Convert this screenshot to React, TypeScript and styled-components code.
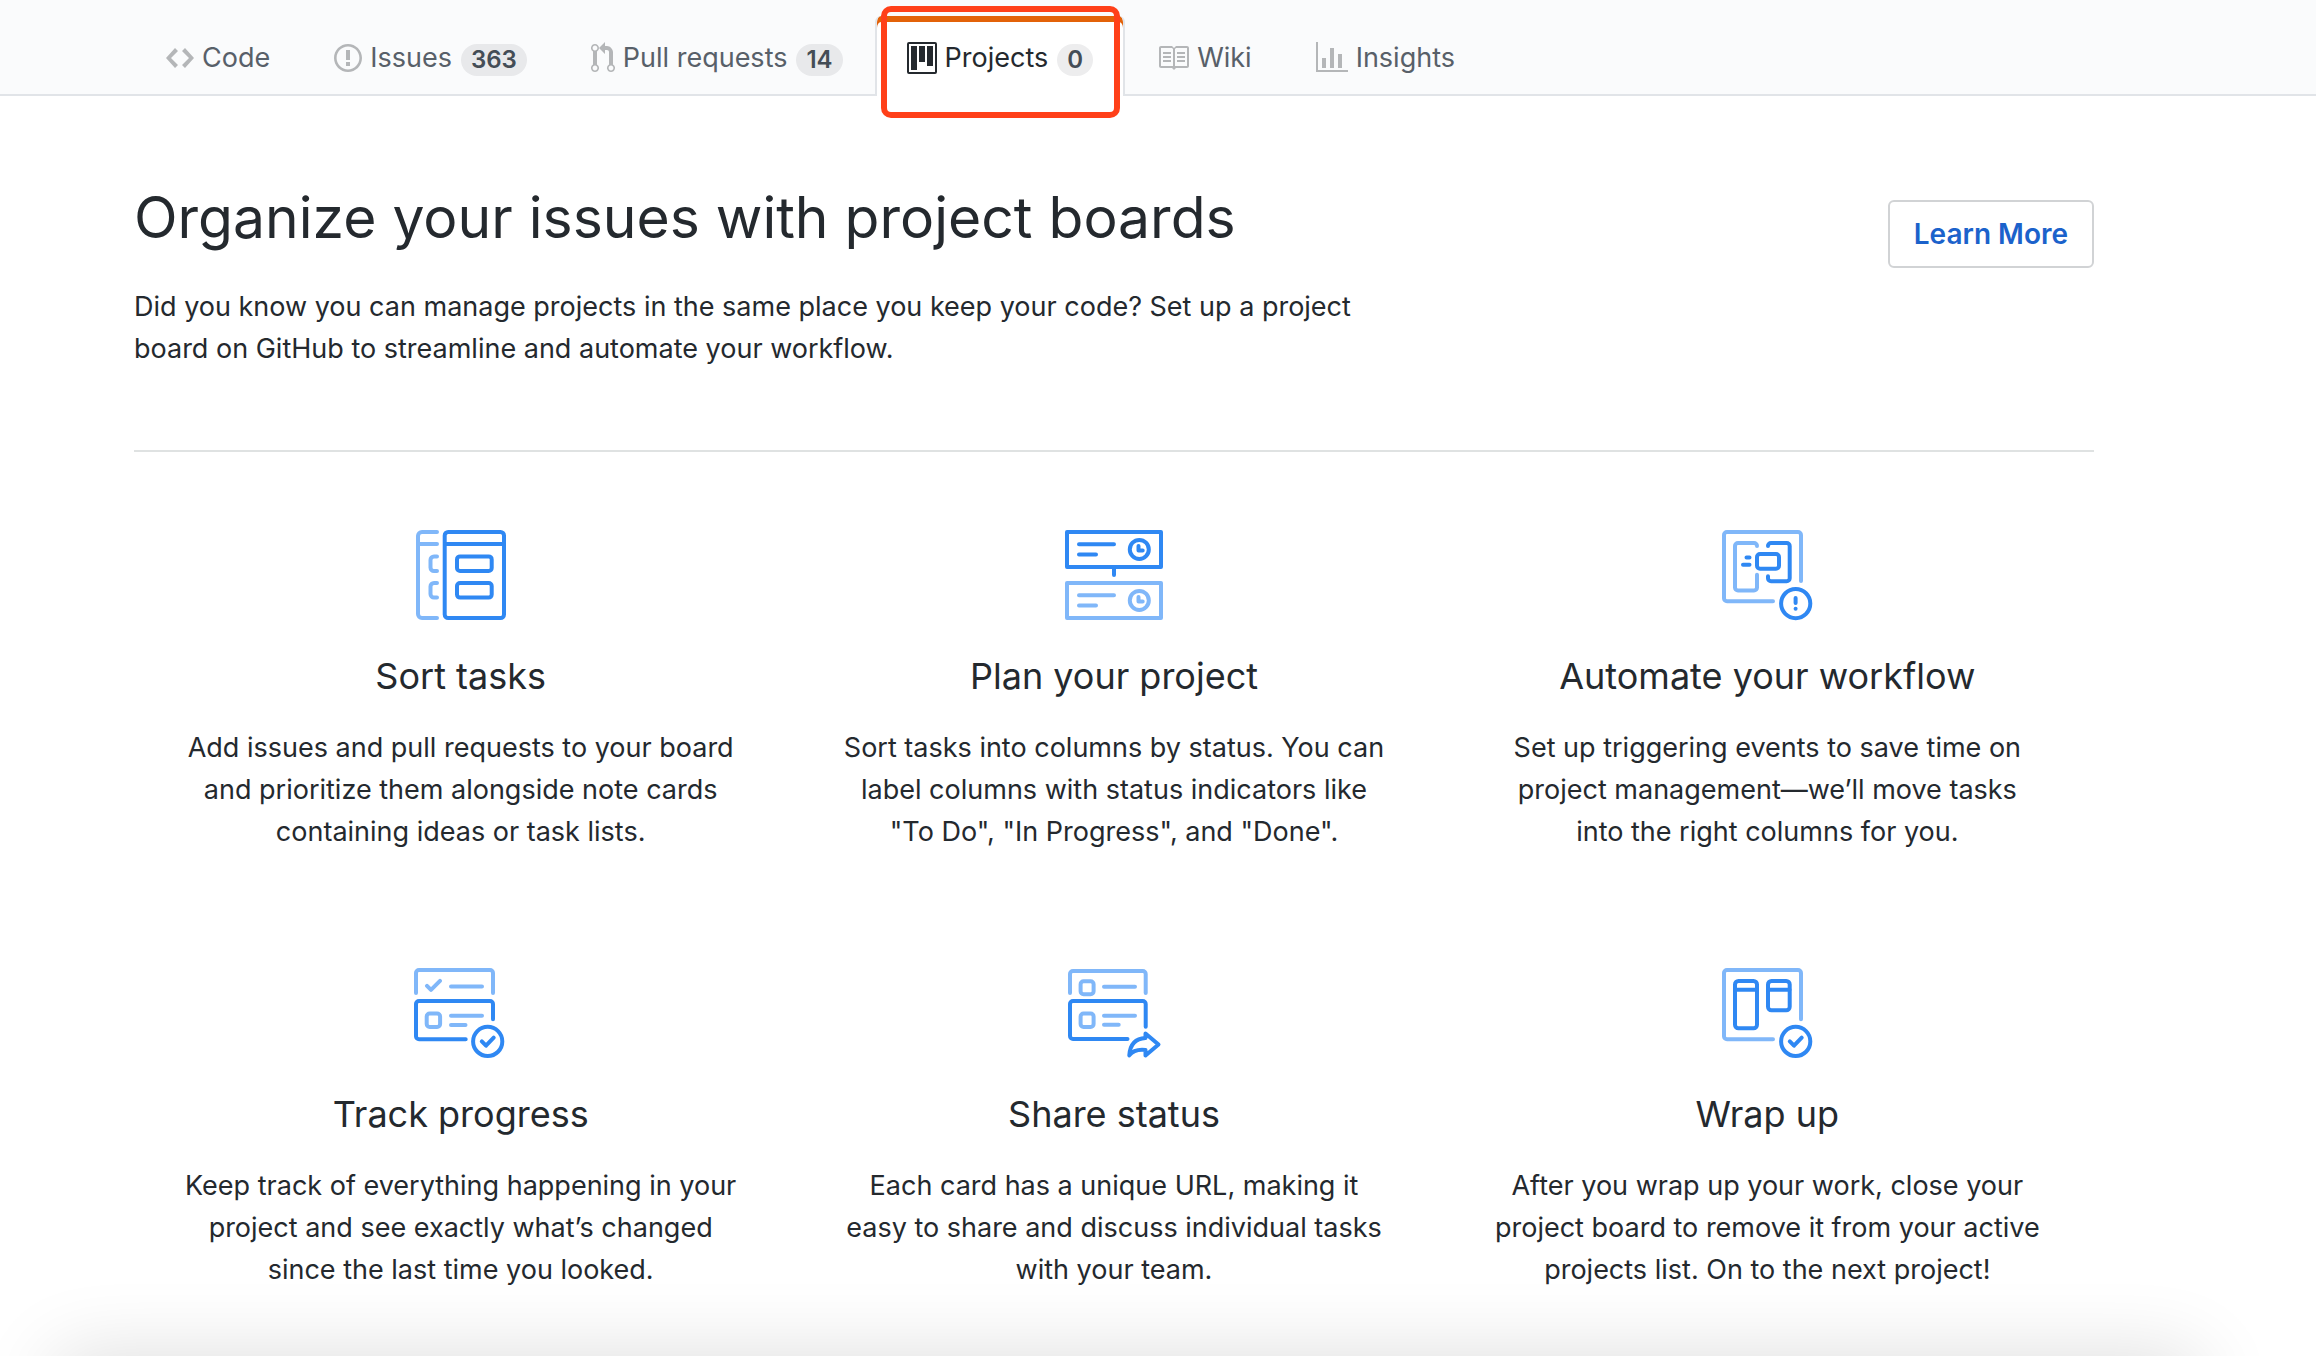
import React from 'react';
import styled, { createGlobalStyle } from 'styled-components';

const DARK = '#2f88f3';
const LIGHT = '#80b7f9';

const GlobalStyle = createGlobalStyle`
  * { box-sizing: border-box; }
  body {
    margin: 0;
    background: #ffffff;
    color: #24292e;
    font-family: Inter, Roboto, "Liberation Sans", sans-serif;
    font-size: 27px;
    line-height: 42px;
  }
  h1, h2, p { margin: 0; font-weight: 400; }
`;

const Page = styled.div`
  position: relative;
  min-height: 100vh;
  overflow: hidden;
`;

const TabBar = styled.nav`
  display: flex;
  align-items: flex-end;
  height: 96px;
  padding-left: 134px;
  background: #fafbfc;
  box-shadow: inset 0 -2px 0 #e1e4e8;
`;

const Tab = styled.a<{ $active?: boolean }>`
  position: relative;
  display: flex;
  align-items: center;
  gap: 8px;
  height: 80px;
  padding: 4px 30px 0;
  border: solid ${p => (p.$active ? '#e1e4e8' : 'transparent')};
  border-width: 0 2px;
  border-radius: 6px 6px 0 0;
  background: ${p => (p.$active ? '#ffffff' : 'transparent')};
  box-shadow: ${p => (p.$active ? 'inset 0 6px 0 #e36209' : 'none')};
  color: ${p => (p.$active ? '#24292e' : '#586069')};
  text-decoration: none;
  white-space: nowrap;

  svg {
    display: block;
    height: 32px;
    fill: ${p => (p.$active ? '#24292e' : '#b4b6b8')};
  }
`;

const Count = styled.span`
  height: 32px;
  margin: 4px 0 0 1px;
  padding: 0 10px;
  border-radius: 16px;
  background: rgba(27, 31, 35, 0.08);
  color: #444d56;
  font-size: 24px;
  font-weight: 600;
  line-height: 32px;
`;

const Highlight = styled.span`
  position: absolute;
  inset: -10px 3px -22px 4px;
  border: 6px solid #ff4019;
  border-radius: 10px;
  pointer-events: none;
`;

const Main = styled.main`
  max-width: 2094px;
  padding-left: 134px;
`;

const Intro = styled.header`
  display: flex;
  justify-content: space-between;
  align-items: flex-start;
  padding: 80px 0;
  border-bottom: 2px solid #dfe2e2;
`;

const Heading = styled.h1`
  margin-bottom: 26px;
  font-size: 57px;
  line-height: 84px;
`;

const Lead = styled.p`
  max-width: 1280px;
`;

const LearnMore = styled.button`
  height: 68px;
  margin-top: 24px;
  padding: 0 24px;
  border: 2px solid #d1d3d5;
  border-radius: 6px;
  background: #ffffff;
  color: #1b62cb;
  font: inherit;
  font-size: 28px;
  font-weight: 600;
`;

const Features = styled.div`
  display: grid;
  grid-template-columns: repeat(3, 1fr);
  row-gap: 110px;
  padding: 73px 0 64px;
`;

const Feature = styled.section`
  display: flex;
  flex-direction: column;
  align-items: center;
  padding: 0 40px;
  text-align: center;
`;

const FeatureIcon = styled.svg`
  width: 100px;
  height: 100px;
  fill: none;
  stroke-width: 4;
  stroke-linecap: round;
  stroke-linejoin: round;
`;

const FeatureTitle = styled.h2`
  margin: 21px 0;
  font-size: 36px;
  line-height: 60px;
`;

const Line = styled.span`
  display: block;
  white-space: nowrap;
`;

const BottomShade = styled.div`
  position: absolute;
  top: 100%;
  left: 56px;
  right: 118px;
  height: 80px;
  box-shadow: 0 0 80px rgba(0, 0, 0, 0.14);
  pointer-events: none;
`;

const tabs = [
  {
    label: 'Code', width: 14,
    d: 'M9.5 3L8 4.5 11.5 8 8 11.5 9.5 13 14 8 9.5 3zm-5 0L0 8l4.5 5L6 11.5 2.5 8 6 4.5 4.5 3z',
  },
  {
    label: 'Issues', width: 14, count: 363,
    d: 'M7 2.3c3.14 0 5.7 2.56 5.7 5.7s-2.56 5.7-5.7 5.7A5.71 5.71 0 0 1 1.3 8c0-3.14 2.56-5.7 5.7-5.7zM7 1C3.14 1 0 4.14 0 8s3.14 7 7 7 7-3.14 7-7-3.14-7-7-7zm1 3H6v5h2V4zm0 6H6v2h2v-2z',
  },
  {
    label: 'Pull requests', width: 12, count: 14,
    d: 'M11 11.28V5c-.03-.78-.34-1.47-.94-2.06C9.46 2.35 8.78 2.03 8 2H7V0L4 3l3 3V4h1c.27.02.48.11.69.31.21.2.3.42.31.69v6.28A1.993 1.993 0 0 0 10 15a1.993 1.993 0 0 0 1-3.72zm-1 2.92c-.66 0-1.2-.55-1.2-1.2 0-.65.55-1.2 1.2-1.2.65 0 1.2.55 1.2 1.2 0 .65-.55 1.2-1.2 1.2zM4 3c0-1.11-.89-2-2-2a1.993 1.993 0 0 0-1 3.72v6.56A1.993 1.993 0 0 0 2 15a1.993 1.993 0 0 0 1-3.72V4.72c.59-.34 1-.98 1-1.72zm-.8 10c0 .66-.55 1.2-1.2 1.2-.65 0-1.2-.55-1.2-1.2 0-.65.55-1.2 1.2-1.2.65 0 1.2.55 1.2 1.2zM2 4.2C1.34 4.2.8 3.65.8 3c0-.65.55-1.2 1.2-1.2.65 0 1.2.55 1.2 1.2 0 .65-.55 1.2-1.2 1.2z',
  },
  {
    label: 'Projects', width: 15, count: 0, active: true,
    d: 'M10 12h3V2h-3v10zm-4-2h3V2H6v8zm-4 4h3V2H2v12zm-1 1h13V1H1v14zM14 0H1a1 1 0 0 0-1 1v14a1 1 0 0 0 1 1h13a1 1 0 0 0 1-1V1a1 1 0 0 0-1-1z',
  },
  {
    label: 'Wiki', width: 16,
    d: 'M3 5h4v1H3V5zm0 3h4V7H3v1zm0 2h4V9H3v1zm11-5h-4v1h4V5zm0 2h-4v1h4V7zm0 2h-4v1h4V9zm2-6v9c0 .55-.45 1-1 1H9.5l-1 1-1-1H2c-.55 0-1-.45-1-1V3c0-.55.45-1 1-1h5.5l1 1 1-1H15c.55 0 1 .45 1 1zm-8 .5L7.5 3H2v9h6V3.5zm7-.5H9.5l-.5.5V12h6V3z',
  },
  {
    label: 'Insights', width: 16,
    d: 'M16 14v1H0V0h1v14h15zM5 13H3V8h2v5zm4 0H7V3h2v10zm4 0h-2V6h2v7z',
  },
];

const features = [
  {
    title: 'Sort tasks',
    lines: ['Add issues and pull requests to your board', 'and prioritize them alongside note cards', 'containing ideas or task lists.'],
    icon: (
      <>
        <g stroke={LIGHT}>
          <path d="M26 7H11a4 4 0 0 0-4 4v78a4 4 0 0 0 4 4h15M7 19h19" />
          <path d="M26 31.5h-3a3.500 3.500 0 0 0-3.500 3.500v7.500a3.500 3.500 0 0 0 3.500 3.500h3M26 58h-3a3.500 3.500 0 0 0-3.500 3.500v7.500a3.500 3.500 0 0 0 3.500 3.500h3" />
        </g>
        <g stroke={DARK}>
          <rect x="33.700" y="7" width="59.300" height="86" rx="3.500" />
          <path d="M34 19h59" />
          <rect x="46" y="31.400" width="34.700" height="14.600" rx="3" />
          <rect x="46" y="58" width="34.700" height="14.600" rx="3" />
        </g>
      </>
    ),
  },
  {
    title: 'Plan your project',
    lines: ['Sort tasks into columns by status. You can', 'label columns with status indicators like', '"To Do", "In Progress", and "Done".'],
    icon: (
      <>
        <g stroke={DARK}>
          <rect x="3" y="7" width="94" height="35" />
          <path d="M15 19.300h35M15 29.500h17M50 44v6M74.500 21v4.600h4.200" />
          <circle cx="75.300" cy="24.400" r="9.500" />
        </g>
        <g stroke={LIGHT}>
          <rect x="3" y="58" width="94" height="35" />
          <path d="M15 70.300h35M15 80.500h17M74.500 72v4.600h4.200" />
          <circle cx="75.300" cy="75.400" r="9.500" />
        </g>
      </>
    ),
  },
  {
    title: 'Automate your workflow',
    lines: ['Set up triggering events to save time on', 'project management—we’ll move tasks', 'into the right columns for you.'],
    icon: (
      <>
        <g stroke={LIGHT}>
          <path d="M84 56V10a3 3 0 0 0-3-3H10a3 3 0 0 0-3 3v63.300a3 3 0 0 0 3 3h46" />
          <path d="M40 21v0a3 3 0 0 0-3-3H21a3 3 0 0 0-3 3v41.500a3 3 0 0 0 3 3h16a3 3 0 0 0 3-3V49.700" />
        </g>
        <g stroke={DARK}>
          <path d="M51 21v0a3 3 0 0 1 3-3h15.700a3 3 0 0 1 3 3v32.300a3 3 0 0 1-3 3H54a3 3 0 0 1-3-3v-2" />
          <rect x="40" y="29" width="22" height="14.700" rx="3" />
          <path d="M29.500 32.400h3M26 39.700h6.500M78.600 73v5" />
          <circle cx="78.700" cy="78.600" r="14.600" />
        </g>
        <circle cx="78.600" cy="83.700" r="2" fill={DARK} />
      </>
    ),
  },
  {
    title: 'Track progress',
    lines: ['Keep track of everything happening in your', 'project and see exactly what’s changed', 'since the last time you looked.'],
    icon: (
      <>
        <g stroke={LIGHT}>
          <path d="M5 30V10a3 3 0 0 1 3-3h71a3 3 0 0 1 3 3v20" />
          <path d="M16 22.800l4 4 9-9M40 23.400h31M40 52.700h31M40 62h14.500" />
          <rect x="15.700" y="50.500" width="13.400" height="13.400" rx="3" />
        </g>
        <g stroke={DARK}>
          <path d="M82 56.300V41a3 3 0 0 0-3-3H8a3 3 0 0 0-3 3v32.300a3 3 0 0 0 3 3h46.700" />
          <circle cx="76.700" cy="78.400" r="14.600" />
          <path d="M70.800 78.400l4.200 4.300 7.700-8" />
        </g>
      </>
    ),
  },
  {
    title: 'Share status',
    lines: ['Each card has a unique URL, making it', 'easy to share and discuss individual tasks', 'with your team.'],
    icon: (
      <>
        <g stroke={LIGHT}>
          <path d="M6 30V11a3 3 0 0 1 3-3h69.700a3 3 0 0 1 3 3v19" />
          <rect x="16.600" y="18.200" width="13" height="13" rx="3" />
          <rect x="16.600" y="50.500" width="13" height="13.400" rx="3" />
          <path d="M40 23.700h31M40 52.700h31M40 61.800h14.700" />
        </g>
        <g stroke={DARK}>
          <path d="M81.700 63.700V41a3 3 0 0 0-3-3H9a3 3 0 0 0-3 3v32a3 3 0 0 0 3 3h54.500" />
          <path d="M65.300 92.300C66 82 71 75.500 81.500 75v-4.500l13 11-13 11v-5.500c-7-.8-12.500.5-16.200 5.300z" />
        </g>
      </>
    ),
  },
  {
    title: 'Wrap up',
    lines: ['After you wrap up your work, close your', 'project board to remove it from your active', 'projects list. On to the next project!'],
    icon: (
      <>
        <path stroke={LIGHT} d="M84 56.300V10a3 3 0 0 0-3-3H10a3 3 0 0 0-3 3v63.300a3 3 0 0 0 3 3h46" />
        <g stroke={DARK}>
          <rect x="18" y="18" width="22" height="47.300" rx="3.500" />
          <rect x="51" y="18" width="21.700" height="29.300" rx="3.500" />
          <path d="M18 26.800h22M51 26.800h21.500" />
          <circle cx="78.700" cy="78.400" r="14.600" />
          <path d="M72.800 78.400l4.200 4.300 7.700-8" />
        </g>
      </>
    ),
  },
];

export default function App() {
  return (
    <Page>
      <GlobalStyle />
      <TabBar aria-label="Repository">
        {tabs.map(tab => (
          <Tab key={tab.label} href="#" $active={tab.active} aria-current={tab.active ? 'page' : undefined}>
            <svg width={tab.width * 2} viewBox={`0 0 ${tab.width} 16`} aria-hidden="true">
              <path fillRule="evenodd" d={tab.d} />
            </svg>
            {tab.label}
            {tab.count !== undefined && <Count>{tab.count}</Count>}
            {tab.active && <Highlight />}
          </Tab>
        ))}
      </TabBar>
      <Main>
        <Intro>
          <div>
            <Heading>Organize your issues with project boards</Heading>
            <Lead>
              Did you know you can manage projects in the same place you keep your code? Set up a project
              board on GitHub to streamline and automate your workflow.
            </Lead>
          </div>
          <LearnMore type="button">Learn More</LearnMore>
        </Intro>
        <Features>
          {features.map(feature => (
            <Feature key={feature.title}>
              <FeatureIcon viewBox="0 0 100 100" aria-hidden="true">{feature.icon}</FeatureIcon>
              <FeatureTitle>{feature.title}</FeatureTitle>
              <p>
                {feature.lines.map(line => <Line key={line}>{line}</Line>)}
              </p>
            </Feature>
          ))}
        </Features>
      </Main>
      <BottomShade />
    </Page>
  );
}
